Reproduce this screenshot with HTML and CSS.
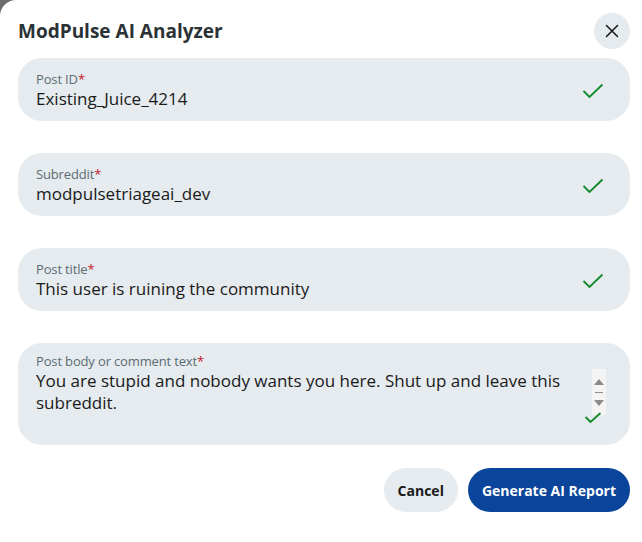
FILE: index.html
```html
<!DOCTYPE html>
<html lang="en">
<head>
  <meta charset="UTF-8">
  <meta name="viewport" content="width=device-width, initial-scale=1.0">
  <title>ModPulse AI Analyzer</title>
  <link rel="stylesheet" href="styles.css">
</head>
<body>
  <div class="modal">
    <div class="modal-header">
      <h2>ModPulse AI Analyzer</h2>
      <button class="close-btn" aria-label="Close">
        <svg width="16" height="16" viewBox="0 0 16 16"><path d="M2.5 2.5l11 11M13.5 2.5l-11 11" stroke="#1a1a1a" stroke-width="1.6" stroke-linecap="round"/></svg>
      </button>
    </div>

    <div class="field">
      <div class="field-text">
        <label>Post ID<span class="req">*</span></label>
        <div class="value">Existing_Juice_4214</div>
      </div>
      <svg class="check" width="22" height="16" viewBox="0 0 22 16"><path d="M1.5 8l6 6L20.5 1.5" fill="none" stroke="#118a2b" stroke-width="1.8"/></svg>
    </div>

    <div class="field">
      <div class="field-text">
        <label>Subreddit<span class="req">*</span></label>
        <div class="value">modpulsetriageai_dev</div>
      </div>
      <svg class="check" width="22" height="16" viewBox="0 0 22 16"><path d="M1.5 8l6 6L20.5 1.5" fill="none" stroke="#118a2b" stroke-width="1.8"/></svg>
    </div>

    <div class="field">
      <div class="field-text">
        <label>Post title<span class="req">*</span></label>
        <div class="value">This user is ruining the community</div>
      </div>
      <svg class="check" width="22" height="16" viewBox="0 0 22 16"><path d="M1.5 8l6 6L20.5 1.5" fill="none" stroke="#118a2b" stroke-width="1.8"/></svg>
    </div>

    <div class="field field-area">
      <div class="field-text">
        <label>Post body or comment text<span class="req">*</span></label>
        <div class="value">You are stupid and nobody wants you here. Shut up and leave this subreddit.</div>
      </div>
      <div class="area-side">
        <div class="spinner">
          <span class="arrow-up"></span>
          <span class="divider"></span>
          <span class="arrow-down"></span>
        </div>
        <svg class="check small" width="18" height="12" viewBox="0 0 18 12"><path d="M1.5 5l5 5L16.5 1" fill="none" stroke="#118a2b" stroke-width="1.8"/></svg>
      </div>
    </div>

    <div class="actions">
      <button class="btn btn-cancel">Cancel</button>
      <button class="btn btn-primary">Generate AI Report</button>
    </div>
  </div>
</body>
</html>
```

FILE: styles.css
```css
body {
  margin: 0;
  background-color: #6b6b6b;
  font-family: "Open Sans", "Noto Sans", sans-serif;
}

.modal {
  background-color: #ffffff;
  border-radius: 16px 0 0 0;
  min-height: 542px;
  box-sizing: border-box;
  padding: 13px 12px 0 18px;
}

.modal-header {
  display: flex;
  justify-content: space-between;
  align-items: center;
  margin-bottom: 9px;
}

h2 {
  margin: 0;
  font-size: 19px;
  font-weight: 700;
  color: #2a3236;
}

.close-btn {
  width: 36px;
  height: 36px;
  border-radius: 50%;
  border: none;
  background-color: #e5ebee;
  display: flex;
  align-items: center;
  justify-content: center;
  padding: 0;
}

.field {
  display: flex;
  align-items: center;
  justify-content: space-between;
  background-color: #e5ebee;
  border-radius: 24px;
  height: 63px;
  box-sizing: border-box;
  padding: 2px 26px 0 18px;
  margin-bottom: 32px;
  width: 612px;
}

.field-text {
  display: flex;
  flex-direction: column;
}

label {
  font-size: 13px;
  color: #5c6c74;
  line-height: 17px;
  letter-spacing: -0.15px;
}

.req {
  color: #c4162a;
}

.value {
  font-size: 17px;
  color: #1a1a1b;
  line-height: 22px;
}

.field-area {
  height: 102px;
  align-items: flex-start;
  padding-top: 10px;
  margin-bottom: 23px;
}

.field-area .value {
  width: 545px;
}

.area-side {
  display: flex;
  flex-direction: column;
  align-items: center;
  margin-top: 16px;
  margin-right: -2px;
}

.spinner {
  width: 14px;
  height: 46px;
  background-color: #f4f4f4;
  display: flex;
  flex-direction: column;
  align-items: center;
  justify-content: center;
  gap: 7px;
}

.arrow-up, .arrow-down {
  width: 0;
  height: 0;
  border-left: 5px solid transparent;
  border-right: 5px solid transparent;
}

.arrow-up {
  border-bottom: 6px solid #8a8a8a;
}

.arrow-down {
  border-top: 6px solid #8a8a8a;
}

.divider {
  width: 8px;
  height: 1px;
  background-color: #8a8a8a;
}

.check.small {
  margin-top: -3px;
  margin-left: -13px;
}

.actions {
  display: flex;
  justify-content: flex-end;
  gap: 10px;
  width: 612px;
}

.btn {
  height: 44px;
  border: none;
  border-radius: 22px;
  font-family: "Open Sans", "Noto Sans", sans-serif;
  font-size: 14px;
  font-weight: 700;
  padding: 0 14px;
  cursor: pointer;
}

.btn-cancel {
  background-color: #e5ebee;
  color: #1a1a1b;
}

.btn-primary {
  background-color: #0a449b;
  color: #ffffff;
}
```
